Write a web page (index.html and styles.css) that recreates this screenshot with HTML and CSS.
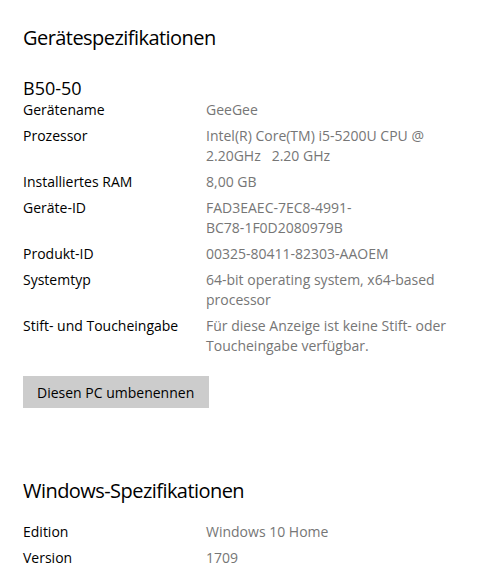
FILE: index.html
```html
<!DOCTYPE html>
<html lang="de">
<head>
    <meta charset="UTF-8">
    <title>Info</title>
    <link rel="stylesheet" href="styles.css">
</head>
<body>

<!-- Gerätespezifikationen -->
<div class="section">
    <h2>Gerätespezifikationen</h2>
    <div class="device">B50-50</div>
    <div class="specs">
        <div class="label">Gerätename</div>
        <div class="value">GeeGee</div>
        <div class="label">Prozessor</div>
        <div class="value">Intel(R) Core(TM) i5-5200U CPU @<br>2.20GHz&nbsp;&nbsp; 2.20 GHz</div>
        <div class="label">Installiertes RAM</div>
        <div class="value">8,00 GB</div>
        <div class="label">Geräte-ID</div>
        <div class="value">FAD3EAEC-7EC8-4991-<br>BC78-1F0D2080979B</div>
        <div class="label">Produkt-ID</div>
        <div class="value">00325-80411-82303-AAOEM</div>
        <div class="label">Systemtyp</div>
        <div class="value">64-bit operating system, x64-based<br>processor</div>
        <div class="label">Stift- und Toucheingabe</div>
        <div class="value">Für diese Anzeige ist keine Stift- oder<br>Toucheingabe verfügbar.</div>
    </div>
    <button class="rename-btn">Diesen PC umbenennen</button>
</div>

<!-- Windows-Spezifikationen -->
<div class="section windows">
    <h2>Windows-Spezifikationen</h2>
    <div class="specs">
        <div class="label">Edition</div>
        <div class="value">Windows 10 Home</div>
        <div class="label">Version</div>
        <div class="value">1709</div>
    </div>
</div>

</body>
</html>
```

FILE: styles.css
```css
* {
    margin: 0;
    padding: 0;
    box-sizing: border-box;
}

body {
    font-family: 'Open Sans', 'Noto Sans', sans-serif;
    background-color: #fff;
    color: #000;
    padding-left: 23px;
    padding-top: 24px;
}

h2 {
    font-size: 20px;
    font-weight: 400;
    line-height: 28px;
    letter-spacing: -0.55px;
}

.device {
    font-size: 18px;
    line-height: 24px;
    margin-top: 24px;
}

.specs {
    display: grid;
    grid-template-columns: 183px 260px;
    row-gap: 6px;
    font-size: 14px;
    line-height: 20px;
}

.value {
    color: #767676;
}

.rename-btn {
    margin-top: 20px;
    height: 32px;
    padding: 0 15px 0 14px;
    background: #ccc;
    border: none;
    font-family: inherit;
    font-size: 14px;
    color: #000;
}

.windows {
    margin-top: 69px;
}

.windows .specs {
    margin-top: 17px;
}
```
